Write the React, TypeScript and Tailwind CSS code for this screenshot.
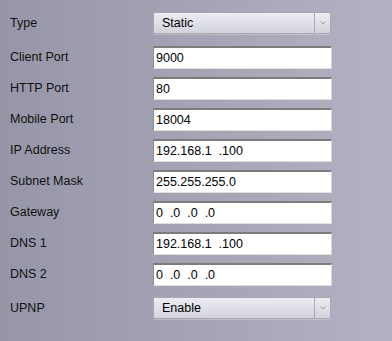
import React from "react";

const font = { fontFamily: '"Liberation Sans", Arial, sans-serif' };

function Select({ value }: { value: string }) {
  return (
    <div className="flex h-[22px] w-[178px] items-stretch rounded-[2px] border border-[#a9a9b6] bg-gradient-to-b from-[#ececf2] to-[#d3d3dd] shadow-[0_1px_0_rgba(255,255,255,0.25)]">
      <div className="flex flex-1 items-center pl-[8px] text-[12.5px] text-black">{value}</div>
      <div className="flex w-[16px] items-center justify-center border-l border-[#a9a9b6]">
        <svg width="6" height="4" viewBox="0 0 6 4">
          <path d="M0.5 0.5 L3 3 L5.5 0.5" stroke="#9a9aa6" strokeWidth="1" fill="none" />
        </svg>
      </div>
    </div>
  );
}

function Input({ value }: { value: string }) {
  return (
    <div className="flex h-[23px] w-[179px] items-center border-t-2 border-l border-r border-b border-t-[#7c7c7c] border-l-[#8c8c8c] border-r-[#d8d8d8] border-b-[#e0e0e0] bg-white pl-[2px] text-[12.5px] text-black">
      {value}
    </div>
  );
}

function Row({ label, children, className = "" }: { label: string; children: React.ReactNode; className?: string }) {
  return (
    <div className={"flex items-center " + className}>
      <div className="w-[153px] shrink-0 pl-[10px] text-[12.5px] text-[#111]">{label}</div>
      {children}
    </div>
  );
}

export default function App() {
  const inputs: [string, string][] = [
    ["Client Port", "9000"],
    ["HTTP Port", "80"],
    ["Mobile Port", "18004"],
    ["IP Address", "192.168.1\u00a0\u00a0.100"],
    ["Subnet Mask", "255.255.255.0"],
    ["Gateway", "0\u00a0\u00a0.0\u00a0\u00a0.0\u00a0\u00a0.0"],
    ["DNS 1", "192.168.1\u00a0\u00a0.100"],
    ["DNS 2", "0\u00a0\u00a0.0\u00a0\u00a0.0\u00a0\u00a0.0"],
  ];
  return (
    <div
      style={font}
      className="h-[341px] w-[392px] overflow-hidden bg-gradient-to-r from-[#9696a8] to-[#b3b2c3] pt-[12px]"
    >
      <Row label="Type" className="mb-[12px]">
        <Select value="Static" />
      </Row>
      <div className="flex flex-col gap-[8px]">
        {inputs.map(([l, v]) => (
          <Row key={l} label={l}>
            <Input value={v} />
          </Row>
        ))}
      </div>
      <Row label="UPNP" className="mt-[11px]">
        <Select value="Enable" />
      </Row>
    </div>
  );
}
